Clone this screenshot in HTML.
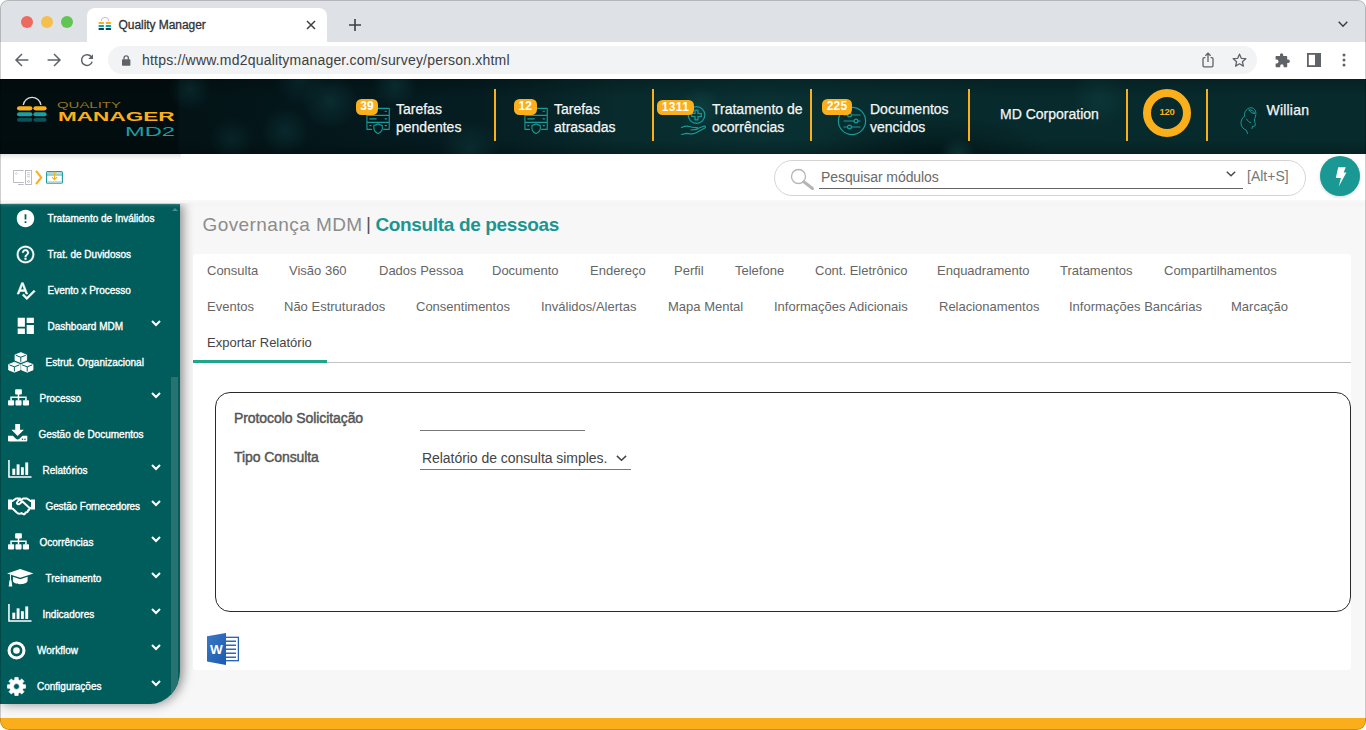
<!DOCTYPE html>
<html lang="pt-BR">
<head>
<meta charset="utf-8">
<title>Quality Manager</title>
<style>
*{box-sizing:border-box;margin:0;padding:0}
html,body{width:1366px;height:730px;overflow:hidden;background:#fff;font-family:"Liberation Sans",sans-serif;}
#win{position:absolute;left:0;top:0;width:1366px;height:730px;border-radius:8px 8px 9px 9px;overflow:hidden;background:#f7f7f7}
#frame{position:absolute;left:0;top:0;width:1366px;height:730px;border:1px solid rgba(0,0,0,.19);border-radius:8px 8px 9px 9px;pointer-events:none;z-index:50}
svg{position:absolute;overflow:visible}
.abs{position:absolute}
/* chrome */
#tabbar{position:absolute;left:0;top:0;width:1366px;height:42px;background:#dee1e6}
#tab{position:absolute;left:87px;top:8px;width:240px;height:34px;background:#fff;border-radius:8px 8px 0 0}
#tab .t{position:absolute;left:31.500px;top:9.500px;font-size:12px;color:#2f3337;letter-spacing:-0.050px;white-space:nowrap;-webkit-text-stroke:0.300px #2f3337}
.dot{position:absolute;top:16px;width:12px;height:12px;border-radius:50%}
#addr{position:absolute;left:0;top:42px;width:1366px;height:37px;background:#fff}
#pill{position:absolute;left:108px;top:4px;width:1149px;height:28px;border-radius:14px;background:#f1f3f4}
#url{position:absolute;left:34px;top:6px;font-size:14px;color:#3c4043;white-space:nowrap;letter-spacing:0.200px}
/* header */
#hdr{position:absolute;left:0;top:79px;width:1366px;height:75px;overflow:hidden;z-index:4;background:
radial-gradient(circle 22px at 232px 60px,rgba(18,74,78,.28),transparent 100%),
radial-gradient(circle 22px at 190px 10px,rgba(18,74,78,.35),transparent 100%),
radial-gradient(circle 28px at 330px 22px,rgba(18,74,78,.40),transparent 100%),
radial-gradient(circle 24px at 285px 52px,rgba(18,74,78,.35),transparent 100%),
radial-gradient(circle 22px at 395px 6px,rgba(18,74,78,.40),transparent 100%),
radial-gradient(circle 26px at 300px 0px,rgba(18,74,78,.30),transparent 100%),
radial-gradient(circle 30px at 470px 70px,rgba(18,74,78,.35),transparent 100%),
radial-gradient(circle 22px at 700px 30px,rgba(30,100,100,.30),transparent 100%),
radial-gradient(circle 18px at 958px 76px,rgba(30,100,100,.35),transparent 100%),
radial-gradient(circle 30px at 1100px 20px,rgba(30,100,100,.18),transparent 100%),
radial-gradient(ellipse 120px 40px at 930px 75px,rgba(0,10,12,.55),transparent 100%),
linear-gradient(180deg,rgba(0,0,0,.22) 0%,rgba(0,0,0,0) 25%,rgba(0,0,0,0) 80%,rgba(0,0,0,.22) 100%),
linear-gradient(90deg,#020d10 0px,#020d10 178px,#031316 179px,#04181c 330px,#051d21 480px,#082b2d 620px,#093032 760px,#072a2c 1000px,#072b2d 1366px)}
.vd{position:absolute;top:10px;width:2px;height:52px;background:#fbb01b}
.ht{position:absolute;color:#f4f6f6;-webkit-text-stroke:0.25px #f4f6f6;font-size:14px;line-height:18px;white-space:nowrap;font-weight:400}
.bdg{position:absolute;height:15.5px;border-radius:5.5px;z-index:2;background:#fbb01b;color:#fff;font-size:12px;font-weight:700;line-height:15.500px;letter-spacing:0.100px;text-align:center}
.lg{position:absolute;line-height:1;white-space:nowrap;transform-origin:0 50%}
.ic{fill:none;stroke:#1a9a98;stroke-width:1.2;stroke-linecap:round;stroke-linejoin:round}
.ring{position:absolute;left:1143px;top:9.5px;width:48px;height:48px;border-radius:50%;border:8.600px solid #fbb01b;text-align:center}
.ring span{display:block;font-size:9.500px;font-weight:700;color:#fbb01b;line-height:30.800px;letter-spacing:-0.300px}
/* toolbar */
#tb{position:absolute;left:0;top:154px;width:1366px;height:46px;background:#fff;box-shadow:0 1px 5px 1px rgba(255,255,255,.9),0 3px 5px rgba(0,0,0,.05);z-index:3}
#tbs{position:absolute;left:0;top:0;width:181px;height:7px;border-radius:0 0 4px 0;background:linear-gradient(180deg,rgba(0,0,0,.11),rgba(0,0,0,.04) 50%,rgba(0,0,0,0))}
#sbw{position:absolute;left:0;top:203px;width:230px;height:527px;overflow:hidden}
#srch{position:absolute;left:774px;top:6px;width:532px;height:36px;border:1px solid #d4d4d4;border-radius:18px;background:#fff}
#srch .ph{position:absolute;left:46px;top:6.500px;font-size:14px;line-height:18px;color:#6a6a6a;letter-spacing:-0.08px;white-space:nowrap}
#srch .ul{position:absolute;left:44px;top:27px;width:424px;height:1px;background:#666}
#srch .ks{position:absolute;left:472px;top:6px;font-size:14px;line-height:18px;color:#777;white-space:nowrap}
#bolt{position:absolute;left:1320px;top:1.800px;width:40px;height:40px;border-radius:50%;background:#1a9893;box-shadow:0 1px 3px rgba(0,0,0,.18)}
/* sidebar */
#sb{position:absolute;left:0;top:1px;width:180px;height:500px;background:#015d5c;border-bottom-right-radius:30px 33px;box-shadow:3px 0 11px rgba(0,0,0,.44);overflow:hidden}
.mi{position:absolute;left:0.500px;width:172px;height:36px;color:#fff;font-size:10px;font-weight:400;-webkit-text-stroke:0.350px #fff;white-space:nowrap}
.mi span{position:absolute;top:11.500px;line-height:14px}
.cv{left:150.500px;top:12.300px;fill:none;stroke:#fff;stroke-width:2}
#sbt{position:absolute;left:171px;top:173px;width:7px;height:320px;background:#277371}
#sbu{position:absolute;left:172px;top:4px;width:0;height:0;border-left:3px solid transparent;border-right:3px solid transparent;border-bottom:3px solid #4b8f8d}
/* content */
#panel{position:absolute;left:193px;top:254px;width:1158px;height:416px;background:#fff;border-radius:3px}
#pin{position:absolute;left:0;top:-1px;width:1158px;height:417px}
.tabs{position:absolute;font-size:13px;color:#555;white-space:nowrap}
#ttl{position:absolute;left:202.500px;top:213px;white-space:nowrap;line-height:24px;font-size:19px}
#ttl .g{color:#8c8c8c;letter-spacing:0.420px}
#ttl .bar{color:#555;margin:0 4.500px 0 3.500px;font-size:19px;position:relative;top:-1px}
#ttl .c{color:#1a9591;font-weight:700;font-size:19px;letter-spacing:-0.350px}
.tb1{position:absolute;font-size:13px;line-height:18px;color:#666;white-space:nowrap}
.tb1.act{color:#444}
#tline{position:absolute;left:0;top:108.500px;width:1158px;height:1px;background:#c2c2c2}
#tact{position:absolute;left:0;top:107px;width:134px;height:2.500px;background:#1fa58c}
#fs{position:absolute;left:22px;top:139px;width:1136px;height:220px;border:1px solid #2a2a2a;border-radius:15px}
.lb{position:absolute;font-size:14px;line-height:18px;color:#555;-webkit-text-stroke:0.450px #555;white-space:nowrap;letter-spacing:-0.080px}
.inp{position:absolute;height:1px;background:#777}
.sel{position:absolute;font-size:14px;line-height:18px;color:#444;white-space:nowrap;letter-spacing:-0.050px}
#foot{position:absolute;left:0;top:718px;width:1366px;height:12px;background:#fbae1b}
</style>
</head>
<body>
<div id="win">
  <div id="tabbar">
    <div class="dot" style="left:21px;background:#ed6a5e"></div>
    <div class="dot" style="left:41px;background:#f5bf4f"></div>
    <div class="dot" style="left:61px;background:#61c554"></div>
    <div id="tab"><svg style="left:10px;top:8px" width="16" height="16" viewBox="0 0 16 16"><path d="M4.2 5.2 A3.8 3.8 0 0 1 11.8 5.2" fill="none" stroke="#b9bcc0" stroke-width="0.9"/><rect x="1.5" y="6" width="5.6" height="2.1" rx="0.8" fill="#fbb01b"/><rect x="8.6" y="6" width="5.6" height="2.1" rx="0.8" fill="#fbb01b"/><rect x="1.5" y="9" width="5.6" height="2.1" rx="0.8" fill="#17a2a2"/><rect x="8.6" y="9" width="5.6" height="2.1" rx="0.8" fill="#17a2a2"/><rect x="1.5" y="12" width="5.6" height="2.1" rx="0.8" fill="#064a50"/><rect x="8.6" y="12" width="5.6" height="2.1" rx="0.8" fill="#064a50"/></svg><div class="t">Quality Manager</div>
      <svg style="left:219px;top:12px" width="10" height="10" viewBox="0 0 10 10"><path d="M1 1 L9 9 M9 1 L1 9" stroke="#3c4043" stroke-width="1.5" fill="none"/></svg></div>
    <svg style="left:348.500px;top:19px" width="12" height="12" viewBox="0 0 12 12"><path d="M6 0 V12 M0 6 H12" stroke="#3c4043" stroke-width="1.6" fill="none"/></svg>
    <svg style="left:1338px;top:21px" width="10" height="7" viewBox="0 0 10 7"><path d="M0.7 0.8 L5 5.2 L9.3 0.8" stroke="#3c4043" stroke-width="1.5" fill="none"/></svg>
  </div>
  <div id="addr">
    <svg style="left:15px;top:11px" width="14" height="14" viewBox="0 0 14 14"><path d="M13.4 7 H1.6 M7 1 L1 7 L7 13" stroke="#5f6368" stroke-width="1.5" fill="none"/></svg>
    <svg style="left:47px;top:11px" width="14" height="14" viewBox="0 0 14 14"><path d="M0.6 7 H12.4 M7 1 L13 7 L7 13" stroke="#5f6368" stroke-width="1.5" fill="none"/></svg>
    <svg style="left:80px;top:11px" width="14" height="14" viewBox="0 0 14 14"><path d="M11.6 4.2 A5.4 5.4 0 1 0 12.2 8.6" stroke="#5f6368" stroke-width="1.5" fill="none"/><path d="M13 1.2 V6 H8.2 Z" fill="#5f6368"/></svg>
    <div id="pill"><svg style="left:14px;top:8.500px" width="8.400" height="11.200" viewBox="0 0 9 12"><rect x="0" y="4.6" width="9" height="7" rx="0.8" fill="#5f6368"/><path d="M2.2 5 V3.2 A2.3 2.3 0 0 1 6.8 3.2 V5" stroke="#5f6368" stroke-width="1.4" fill="none"/></svg><div id="url">https://www.md2qualitymanager.com/survey/person.xhtml</div>
      <svg style="left:1094px;top:6px" width="12" height="16" viewBox="0 0 12 16"><path d="M3.4 5.6 H2.2 A1.2 1.2 0 0 0 1 6.8 V13.6 A1.2 1.2 0 0 0 2.2 14.8 H9.8 A1.2 1.2 0 0 0 11 13.6 V6.8 A1.2 1.2 0 0 0 9.8 5.6 H8.6 M6 10 V1.4 M3.4 3.8 L6 1.2 L8.6 3.8" stroke="#5f6368" stroke-width="1.3" fill="none"/></svg>
      <svg style="left:1124px;top:7px" width="15" height="14" viewBox="0 0 15 14"><path d="M7.5 1.2 L9.3 5.3 L13.8 5.7 L10.4 8.7 L11.4 13.1 L7.5 10.8 L3.6 13.1 L4.6 8.7 L1.2 5.7 L5.7 5.3 Z" stroke="#5f6368" stroke-width="1.3" fill="none" stroke-linejoin="round"/></svg>
    </div>
    <svg style="left:1275px;top:11px" width="15" height="15" viewBox="0 0 15 15"><path d="M5 1.8 a1.6 1.6 0 0 1 3.2 0 V3 H11.4 a0.8 0.8 0 0 1 .8 .8 V6.6 H13.2 a1.7 1.7 0 0 1 0 3.4 H12.2 V13.4 a0.8 0.8 0 0 1 -.8 .8 H8.6 V13 a1.7 1.7 0 0 0 -3.4 0 V14.2 H1.4 a0.8 0.8 0 0 1 -.8 -.8 V10.4 H1.6 a1.9 1.9 0 0 0 0 -3.8 H0.6 V3.8 a0.8 0.8 0 0 1 .8 -.8 H5 Z" fill="#5f6368"/></svg>
    <svg style="left:1307px;top:11px" width="14" height="14" viewBox="0 0 14 14"><rect x="0.9" y="0.9" width="12.2" height="12.2" fill="none" stroke="#5f6368" stroke-width="1.8"/><rect x="8" y="0.9" width="5.1" height="12.2" fill="#5f6368"/></svg>
    <svg style="left:1342px;top:11px" width="4" height="14" viewBox="0 0 4 14"><circle cx="2" cy="2" r="1.5" fill="#5f6368"/><circle cx="2" cy="7" r="1.5" fill="#5f6368"/><circle cx="2" cy="12" r="1.5" fill="#5f6368"/></svg>
  </div>
  <div id="hdr">
    <!-- logo -->
    <svg style="left:17px;top:15px" width="30" height="28" viewBox="0 0 30 28"><path d="M6.3 11 A8.9 8.9 0 0 1 23.9 11" fill="none" stroke="#d9dcdc" stroke-width="1.3"/><rect x="0" y="12.2" width="15.4" height="4.2" rx="2.1" fill="#fbb01b"/><rect x="16.4" y="12.2" width="13.2" height="4.2" rx="2.1" fill="#fbb01b"/><rect x="0" y="18.2" width="15.4" height="4" rx="2" fill="#18a1a4"/><rect x="16.4" y="18.2" width="13.2" height="4" rx="2" fill="#18a1a4"/><rect x="0" y="24" width="15.4" height="3.7" rx="1.85" fill="#0b5258"/><rect x="16.4" y="24" width="13.2" height="3.7" rx="1.85" fill="#0b5258"/></svg>
    <div class="lg" style="left:57px;top:22.300px;font-size:9px;color:#96731a;transform:scaleX(1.660)">QUALITY</div>
    <div class="lg" style="left:58px;top:31.5px;font-size:12px;font-weight:700;color:#fbb01b;transform:scaleX(1.88)">MANAGER</div>
    <div class="lg" style="left:125px;top:47.200px;font-size:12px;color:#1ba0a6;transform:scaleX(1.97)">MD2</div>
    <!-- item 1 -->
    <svg class="ic" style="left:366px;top:28px" width="24.200" height="27" viewBox="0 0 26 29"><path d="M1 1.5 H25 V9 H1 Z M1 9 V16.5 H25 V9 M1 16.5 V24 H6 M25 16.5 V24 H19" /><path d="M4 12.7 H11 M20.5 4.5 h1.5 M20.5 12.7 h1.5 M4 20 h1.5 M20.5 20 h1.5"/><path d="M13 18 C14.500 19.300 16 19.700 17.500 19.700 V23 C17.500 25.500 15.500 27.200 13 28.600 C10.500 27.200 8.500 25.500 8.500 23 V19.700 C10 19.700 11.500 19.300 13 18 Z"/></svg>
    <div class="bdg" style="left:356px;top:20px;width:22px">39</div>
    <div class="ht" style="left:396px;top:20.6px">Tarefas<br>pendentes</div>
    <div class="vd" style="left:494px"></div>
    <!-- item 2 -->
    <svg class="ic" style="left:524px;top:28px" width="24.200" height="27" viewBox="0 0 26 29"><path d="M1 1.5 H25 V9 H1 Z M1 9 V16.5 H25 V9 M1 16.5 V24 H6 M25 16.5 V24 H19" /><path d="M4 12.7 H11 M20.5 4.5 h1.5 M20.5 12.7 h1.5 M4 20 h1.5 M20.5 20 h1.5"/><path d="M13 18 C14.500 19.300 16 19.700 17.500 19.700 V23 C17.500 25.500 15.500 27.200 13 28.600 C10.500 27.200 8.500 25.500 8.500 23 V19.700 C10 19.700 11.500 19.300 13 18 Z"/></svg>
    <div class="bdg" style="left:514px;top:20px;width:22.5px">12</div>
    <div class="ht" style="left:554px;top:20.6px">Tarefas<br>atrasadas</div>
    <div class="vd" style="left:652px"></div>
    <!-- item 3 -->
    <svg class="ic" style="left:681px;top:27px" width="26" height="30" viewBox="0 0 26 30"><circle cx="15.5" cy="9" r="8.3"/><path d="M14 4.2 h3 v3.3 h3.3 v3 h-3.3 v3.3 h-3 v-3.300 h-3.3 v-3 h3.3 Z"/><path d="M0.500 21.5 C4 20 6 19.5 8.500 20.500 C11 21.500 13 21.800 15.500 21.500 C17 21.300 17.300 23 15.500 23.300 L10 24 M15.500 23 L22.500 20.300 C24.500 19.700 25.300 21.300 23.500 22.300 L14 27.300 C11 28.500 8 27.500 5.500 27.300 L0.500 28.500"/></svg>
    <div class="bdg" style="left:657px;top:20.600px;width:37px;letter-spacing:0.400px">1311</div>
    <div class="ht" style="left:712px;top:20.6px">Tratamento de<br>ocorrências</div>
    <div class="vd" style="left:810px"></div>
    <!-- item 4 -->
    <svg class="ic" style="left:837px;top:27px" width="30" height="30" viewBox="0 0 30 30"><circle cx="15" cy="15" r="13.6"/><path d="M7 9 H10.500 M14.500 9 H23 M7 15 H17 M21 15 H23 M7 21 H10.500 M14.500 21 H23"/><circle cx="12.500" cy="9" r="1.900"/><circle cx="19" cy="15" r="1.900"/><circle cx="12.500" cy="21" r="1.900"/></svg>
    <div class="bdg" style="left:822px;top:20.3px;width:30px">225</div>
    <div class="ht" style="left:870px;top:20.6px">Documentos<br>vencidos</div>
    <div class="vd" style="left:968px"></div>
    <div class="ht" style="left:1000px;top:26.2px">MD Corporation</div>
    <div class="vd" style="left:1126px"></div>
    <div class="ring"><span>120</span></div>
    <div class="vd" style="left:1206px"></div>
    <svg class="ic" style="left:1240px;top:28px;stroke-width:1" width="17" height="27" viewBox="0 0 17 27"><path d="M4.500 9 C4 4 7.500 0.800 11 0.800 C14.500 0.800 16.300 4 15.800 7.500 C15.500 10 14.800 11 14.500 13 C14.300 14.500 15.500 16 15.200 18 C15 19.500 13.500 19.500 12.500 19.300 L12 21.500 M4.500 9 C2.500 10.500 0.800 13.500 1 16.500 C1.200 20 3.500 22 6.500 23.500 L7.500 26.500 M9 3 C11.500 2.500 14 4 14.500 6.500 M9 3 C10.500 5.500 12.500 6.500 14.500 6.500 M6.500 12 C7.500 14 9 15 10.500 15.500"/></svg>
    <div class="ht" style="left:1266.500px;top:21.800px;letter-spacing:0.200px">Willian</div>
  </div>
  <div id="tb"><div id="tbs"></div>
    <svg style="left:13px;top:16px" width="19" height="15" viewBox="0 0 19 15" fill="none" stroke="#b4b4bc" stroke-width="0.9"><path d="M10.700 0.500 H0.500 V12.500 H10.700 M5 14.500 H10.700"/><rect x="12.500" y="0.500" width="6" height="14"/><path d="M14 2.800 h3 M14 4.800 h3 M14 6.800 h3 M2.300 3.500 l1 -1 l1 1 l-1 1 Z" stroke-width="0.700"/><circle cx="15.500" cy="11.500" r="1"/></svg>
    <svg style="left:35px;top:16px" width="8" height="15" viewBox="0 0 8 15"><path d="M1 0.800 L6.300 7.500 L1 14.200" fill="none" stroke="#fbb01b" stroke-width="2.100"/></svg>
    <svg style="left:46px;top:17px" width="17" height="13" viewBox="0 0 17 13" fill="none"><rect x="0.600" y="0.600" width="15.800" height="11.800" rx="1.200" stroke="#1a9a98" stroke-width="1.100"/><path d="M1 2.200 H16 M1 11.300 H16" stroke="#a9d9d7" stroke-width="2.200"/><path d="M1 4 H16" stroke="#1a9a98" stroke-width="0.800"/><path d="M8.500 0.500 V8.500 M6 6.200 L8.500 8.700 L11 6.200" stroke="#fbb01b" stroke-width="1.100"/><path d="M11 2.200 h1 M13 2.200 h1" stroke="#fff" stroke-width="0.800"/></svg>
    <div id="srch">
      <svg style="left:15px;top:7px" width="26" height="22" viewBox="0 0 26 22" fill="none"><circle cx="8.500" cy="8.500" r="7" stroke="#b5b5b5" stroke-width="1.300"/><path d="M13.800 13.800 L22.500 20.500" stroke="#b5b5b5" stroke-width="3" stroke-linecap="round"/></svg>
      <div class="ph">Pesquisar módulos</div>
      <div class="ul"></div>
      <svg style="left:451px;top:9.600px" width="10" height="6" viewBox="0 0 10 6"><path d="M0.800 0.800 L5 4.800 L9.200 0.800" fill="none" stroke="#4a4a4a" stroke-width="1.500"/></svg>
      <div class="ks">[Alt+S]</div>
    </div>
    <div id="bolt"><svg style="left:0;top:0" width="40" height="40" viewBox="0 0 40 40"><path d="M18.200 11.300 H25.800 L23.600 16.600 H26.400 L18.800 30.400 L20.900 21.900 H15.800 Z" fill="#fff"/></svg></div>
  </div>
  <div id="sbw"><div id="sb">
    <div class="mi" style="top:-4px"><svg style="left:14.700px;top:7.500px" width="21" height="21" viewBox="0 0 24 24"><path fill="#fff" d="M12 2C6.480 2 2 6.480 2 12s4.480 10 10 10 10-4.480 10-10S17.520 2 12 2zm1 15h-2v-2h2v2zm0-4h-2V7h2v6z"/></svg><span style="left:47px">Tratamento de Inválidos</span></div>
    <div class="mi" style="top:32px"><svg style="left:14.700px;top:7.500px" width="21" height="21" viewBox="0 0 24 24"><path fill="#fff" stroke="#fff" stroke-width="0.300" d="M11 18h2v-2h-2v2zm1-16C6.480 2 2 6.480 2 12s4.480 10 10 10 10-4.480 10-10S17.520 2 12 2zm0 18c-4.410 0-8-3.590-8-8s3.590-8 8-8 8 3.590 8 8-3.590 8-8 8zm0-14c-2.210 0-4 1.790-4 4h2c0-1.100.9-2 2-2s2 .9 2 2c0 2-3 1.750-3 5h2c0-2.250 3-2.500 3-5 0-2.210-1.790-4-4-4z"/></svg><span style="left:47px">Trat. de Duvidosos</span></div>
    <div class="mi" style="top:68px"><svg style="left:14.700px;top:7.500px" width="21" height="21" viewBox="0 0 24 24"><path fill="#fff" stroke="#fff" stroke-width="0.700" d="M12.450 16h2.090L9.430 3H7.570L2.460 16h2.090l1.120-3h5.640l1.140 3zm-6.020-5L8.500 5.480 10.570 11H6.430zm15.160.59l-8.090 8.090L9.830 16l-1.410 1.410 5.090 5.090L23 13l-1.410-1.410z"/></svg><span style="left:47px">Evento x Processo</span></div>
    <div class="mi" style="top:104px"><svg style="left:14.400px;top:7.300px" width="21.600" height="21.600" viewBox="0 0 24 24"><path fill="#fff" d="M3 13h8V3H3v10zm0 8h8v-6H3v6zm10 0h8V11h-8v10zm0-18v6h8V3h-8z"/></svg><span style="left:47px">Dashboard MDM</span><svg class="cv" width="10" height="7" viewBox="0 0 10 7"><path d="M1 1 L5 5 L9 1"/></svg></div>
    <div class="mi" style="top:140px"><svg style="left:7.500px;top:7.500px" width="26" height="21" viewBox="0 0 26 21"><path d="M12.800 0.600 L18.600 2.900 L18.600 8.300 L12.800 10.600 L7.000 8.300 L7.000 2.900 Z" fill="#fff" stroke="#fff" stroke-width="0.800" stroke-linejoin="round"/><path d="M7.800 3.300 L12.800 5.200 L17.800 3.300 M12.800 5.200 V9.800" fill="none" stroke="#015d5c" stroke-width="1"/><path d="M6.400 10.200 L12.200 12.500 L12.200 17.900 L6.400 20.200 L0.600 17.900 L0.600 12.500 Z" fill="#fff" stroke="#fff" stroke-width="0.800" stroke-linejoin="round"/><path d="M1.400 12.900 L6.400 14.800 L11.400 12.900 M6.400 14.800 V19.400" fill="none" stroke="#015d5c" stroke-width="1"/><path d="M19.200 10.200 L25.000 12.500 L25.000 17.900 L19.200 20.200 L13.400 17.900 L13.400 12.500 Z" fill="#fff" stroke="#fff" stroke-width="0.800" stroke-linejoin="round"/><path d="M14.200 12.900 L19.200 14.800 L24.200 12.900 M19.200 14.800 V19.400" fill="none" stroke="#015d5c" stroke-width="1"/></svg><span style="left:45px">Estrut. Organizacional</span></div>
    <div class="mi" style="top:176px"><svg style="left:7px;top:9px" width="21" height="17.500" viewBox="0 0 22 18"><rect x="7.500" y="0" width="7" height="5.500" rx="0.800" fill="#fff"/><rect x="0" y="11.500" width="6.400" height="5.500" rx="0.800" fill="#fff"/><rect x="7.800" y="11.500" width="6.400" height="5.500" rx="0.800" fill="#fff"/><rect x="15.600" y="11.500" width="6.400" height="5.500" rx="0.800" fill="#fff"/><path d="M11 5 V12 M3.200 12 V8.500 H18.800 V12" fill="none" stroke="#fff" stroke-width="1.600"/></svg><span style="left:39px">Processo</span><svg class="cv" width="10" height="7" viewBox="0 0 10 7"><path d="M1 1 L5 5 L9 1"/></svg></div>
    <div class="mi" style="top:212px"><svg style="left:7px;top:8px" width="19.300" height="17.400" viewBox="0 0 20 18"><path fill="#fff" d="M7.500 0 h5 v6 h4 L10 12.500 L3.500 6 h4 Z"/><path fill="#fff" d="M0 12.200 h5 l2.600 2.600 a3.300 3.300 0 0 0 4.800 0 L15 12.200 h5 v5 a0.800 0.800 0 0 1 -0.800 0.800 H0.800 a0.800 0.800 0 0 1 -0.800 -0.800 Z"/><circle cx="15" cy="15.700" r="0.800" fill="#015d5c"/><circle cx="17.600" cy="15.700" r="0.800" fill="#015d5c"/></svg><span style="left:38px">Gestão de Documentos</span></div>
    <div class="mi" style="top:248px"><svg style="left:7px;top:8px" width="24" height="18.300" viewBox="0 0 25 19"><path d="M1 0 V17.700 H24.500" fill="none" stroke="#fff" stroke-width="1.600"/><rect x="4.500" y="9" width="3" height="6.500" fill="#fff"/><rect x="9" y="4.500" width="3" height="11" fill="#fff"/><rect x="13.500" y="7.500" width="3" height="8" fill="#fff"/><rect x="18" y="2.500" width="3" height="13" fill="#fff"/></svg><span style="left:42px">Relatórios</span><svg class="cv" width="10" height="7" viewBox="0 0 10 7"><path d="M1 1 L5 5 L9 1"/></svg></div>
    <div class="mi" style="top:284px"><svg style="left:7px;top:9px" width="27" height="18" viewBox="0 0 27 18"><path fill="#fff" d="M0 2.500 h4 v10 h-4 Z M23 2.500 h4 v10 h-4 Z"/><path fill="none" stroke="#fff" stroke-width="2" stroke-linejoin="round" stroke-linecap="round" d="M4.500 4 L8 1.500 H12 L9 5.500 C8.500 7 10.500 8 12 6.500 L14.500 4.500 L21 10.500 M22.500 4 L19 1.500 H15 L12.500 3.500 M4.500 11.500 L9 15.800 C10.500 17 12 17 13.500 16 L15 17 C16.500 17.500 17.500 16.500 17.500 15.500 C19 15.500 20 14.500 20 13.500 C21.500 13 22 12 21 10.500 L22.500 11"/></svg><span style="left:45px;letter-spacing:-0.120px">Gestão Fornecedores</span><svg class="cv" width="10" height="7" viewBox="0 0 10 7"><path d="M1 1 L5 5 L9 1"/></svg></div>
    <div class="mi" style="top:320px"><svg style="left:7px;top:9px" width="21" height="17.500" viewBox="0 0 22 18"><rect x="7.500" y="0" width="7" height="5.500" rx="0.800" fill="#fff"/><rect x="0" y="11.500" width="6.400" height="5.500" rx="0.800" fill="#fff"/><rect x="7.800" y="11.500" width="6.400" height="5.500" rx="0.800" fill="#fff"/><rect x="15.600" y="11.500" width="6.400" height="5.500" rx="0.800" fill="#fff"/><path d="M11 5 V12 M3.200 12 V8.500 H18.800 V12" fill="none" stroke="#fff" stroke-width="1.600"/></svg><span style="left:39px">Ocorrências</span><svg class="cv" width="10" height="7" viewBox="0 0 10 7"><path d="M1 1 L5 5 L9 1"/></svg></div>
    <div class="mi" style="top:356px"><svg style="left:6.500px;top:9px" width="26.500" height="18.600" viewBox="0 0 27 19"><path fill="#fff" d="M13.500 0 L27 4.500 L13.500 9 L0 4.500 Z"/><path fill="#fff" d="M6 8 L13.500 10.500 L21 8 V12 C21 14 17.500 15.500 13.500 15.500 C9.500 15.500 6 14 6 12 Z"/><path fill="none" stroke="#fff" stroke-width="1" d="M3.500 5.500 V12"/><path fill="#fff" d="M2.500 11.500 h2 l0.800 6.500 h-3.600 Z"/></svg><span style="left:45px">Treinamento</span><svg class="cv" width="10" height="7" viewBox="0 0 10 7"><path d="M1 1 L5 5 L9 1"/></svg></div>
    <div class="mi" style="top:392px"><svg style="left:7px;top:8px" width="24" height="18.300" viewBox="0 0 25 19"><path d="M1 0 V17.700 H24.500" fill="none" stroke="#fff" stroke-width="1.600"/><rect x="4.500" y="9" width="3" height="6.500" fill="#fff"/><rect x="9" y="4.500" width="3" height="11" fill="#fff"/><rect x="13.500" y="7.500" width="3" height="8" fill="#fff"/><rect x="18" y="2.500" width="3" height="13" fill="#fff"/></svg><span style="left:42px">Indicadores</span><svg class="cv" width="10" height="7" viewBox="0 0 10 7"><path d="M1 1 L5 5 L9 1"/></svg></div>
    <div class="mi" style="top:428px"><svg style="left:6.500px;top:8.700px" width="19" height="19" viewBox="0 0 19 19"><circle cx="9.500" cy="9.500" r="7.450" fill="none" stroke="#fff" stroke-width="3.100"/><circle cx="9.500" cy="9.500" r="3.300" fill="#fff"/></svg><span style="left:36.5px">Workflow</span><svg class="cv" width="10" height="7" viewBox="0 0 10 7"><path d="M1 1 L5 5 L9 1"/></svg></div>
    <div class="mi" style="top:464px"><svg style="left:6.500px;top:8.700px" width="19" height="19" viewBox="0 0 19 19"><path fill="#fff" fill-rule="evenodd" stroke="#fff" stroke-width="0.700" stroke-linejoin="round" d="M7.714 2.835 L7.823 0.454 L11.177 0.454 L11.286 2.835 L12.950 3.524 L14.711 1.918 L17.082 4.289 L15.476 6.050 L16.165 7.714 L18.546 7.823 L18.546 11.177 L16.165 11.286 L15.476 12.950 L17.082 14.711 L14.711 17.082 L12.950 15.476 L11.286 16.165 L11.177 18.546 L7.823 18.546 L7.714 16.165 L6.050 15.476 L4.289 17.082 L1.918 14.711 L3.524 12.950 L2.835 11.286 L0.454 11.177 L0.454 7.823 L2.835 7.714 L3.524 6.050 L1.918 4.289 L4.289 1.918 L6.050 3.524 Z M12.400 9.500 A2.900 2.900 0 1 0 6.600 9.500 A2.900 2.900 0 1 0 12.400 9.500 Z"/></svg><span style="left:36.5px">Configurações</span><svg class="cv" width="10" height="7" viewBox="0 0 10 7"><path d="M1 1 L5 5 L9 1"/></svg></div>
    <div id="sbt"></div><div id="sbu"></div>
  </div></div>
  <div id="ttl"><span class="g">Governança MDM</span><span class="bar">|</span><span class="c">Consulta de pessoas</span></div>
  <div id="panel"><div id="pin">
    <div class="tb1" style="left:14px;top:9px">Consulta</div>
    <div class="tb1" style="left:96px;top:9px">Visão 360</div>
    <div class="tb1" style="left:186px;top:9px">Dados Pessoa</div>
    <div class="tb1" style="left:299px;top:9px">Documento</div>
    <div class="tb1" style="left:397px;top:9px">Endereço</div>
    <div class="tb1" style="left:481px;top:9px">Perfil</div>
    <div class="tb1" style="left:542px;top:9px">Telefone</div>
    <div class="tb1" style="left:622px;top:9px">Cont. Eletrônico</div>
    <div class="tb1" style="left:744px;top:9px">Enquadramento</div>
    <div class="tb1" style="left:867px;top:9px">Tratamentos</div>
    <div class="tb1" style="left:971px;top:9px">Compartilhamentos</div>
    <div class="tb1" style="left:14px;top:45px">Eventos</div>
    <div class="tb1" style="left:91px;top:45px">Não Estruturados</div>
    <div class="tb1" style="left:223px;top:45px">Consentimentos</div>
    <div class="tb1" style="left:348px;top:45px">Inválidos/Alertas</div>
    <div class="tb1" style="left:475px;top:45px">Mapa Mental</div>
    <div class="tb1" style="left:581px;top:45px">Informações Adicionais</div>
    <div class="tb1" style="left:746px;top:45px">Relacionamentos</div>
    <div class="tb1" style="left:876px;top:45px">Informações Bancárias</div>
    <div class="tb1" style="left:1038px;top:45px">Marcação</div>
    <div class="tb1 act" style="left:14px;top:81px">Exportar Relatório</div>
    <div id="tline"></div><div id="tact"></div>
    <div id="fs">
      <div class="lb" style="left:18px;top:16px">Protocolo Solicitação</div>
      <div class="inp" style="left:204px;top:36.500px;width:165px"></div>
      <div class="lb" style="left:18px;top:55px">Tipo Consulta</div>
      <div class="sel" style="left:206px;top:56px">Relatório de consulta simples.</div>
      <svg style="left:399.500px;top:62px" width="11" height="6.600" viewBox="0 0 10 6"><path d="M0.800 0.800 L5 4.800 L9.200 0.800" fill="none" stroke="#444" stroke-width="1.300"/></svg>
      <div class="inp" style="left:204px;top:76px;width:211px"></div>
    </div>
    <svg style="left:14px;top:379px" width="33" height="33" viewBox="0 0 33 33"><defs><linearGradient id="wg" x1="0" y1="0" x2="1" y2="1"><stop offset="0" stop-color="#3b78c6"/><stop offset="1" stop-color="#1c5aae"/></linearGradient></defs><rect x="15" y="5.300" width="16.400" height="23.400" fill="#fff" stroke="#2460b2" stroke-width="1.300"/><path d="M19 9.200 H29 M19 13.200 H29 M19 17.200 H29 M19 21.200 H29 M19 25.200 H29" stroke="#2e68b8" stroke-width="1.500"/><path d="M0 4.200 L19 1 V33 L0 29.600 Z" fill="url(#wg)"/><text x="9.300" y="22.300" text-anchor="middle" font-family="Liberation Sans, sans-serif" font-weight="700" font-size="13.500" fill="#fff">W</text></svg>
  </div></div>
  <div id="foot"></div>
  <div id="frame"></div>
</div>
</body>
</html>
